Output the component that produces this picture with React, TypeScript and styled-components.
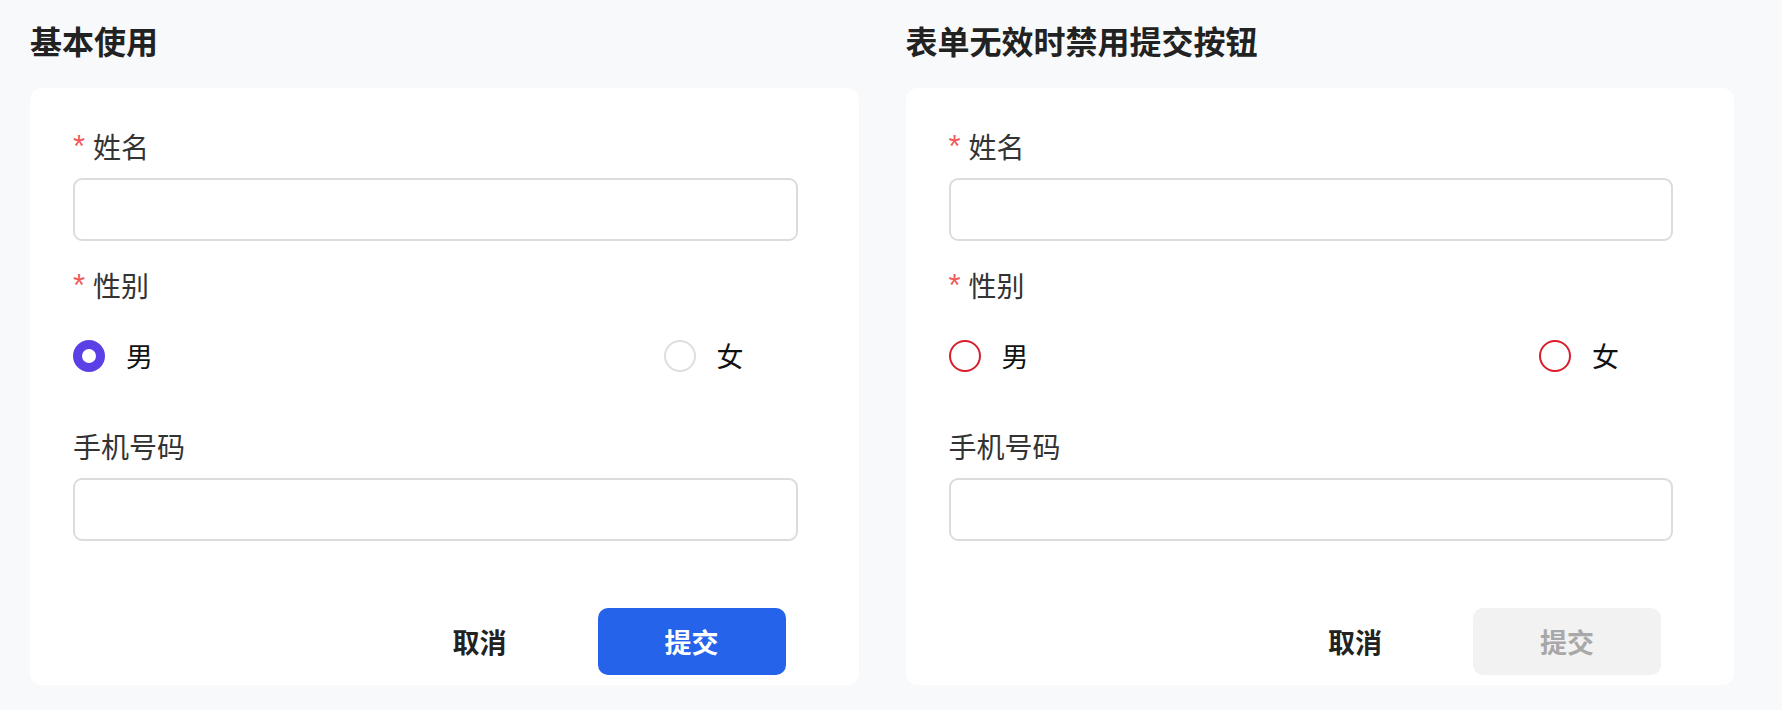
import React, { useState } from "react";
import styled, { createGlobalStyle } from "styled-components";

const GlobalStyle = createGlobalStyle`
  * { box-sizing: border-box; }
  body {
    margin: 0;
    background: #f8f9fb;
    font-family: "Noto Sans CJK SC", "Noto Sans", sans-serif;
    color: #333;
  }
`;

type Gender = "male" | "female" | "";

interface DemoProps {
  title: string;
  strict?: boolean;
}

const Demo = ({ title, strict }: DemoProps) => {
  const [name, setName] = useState("");
  const [gender, setGender] = useState<Gender>(strict ? "" : "male");
  const [phone, setPhone] = useState("");

  const invalid = strict && (!name || !gender);

  return (
    <Section>
      <Title>{title}</Title>
      <Card>
        <Field>
          <Label>
            <Star>*</Star>姓名
          </Label>
          <Input value={name} onChange={(e) => setName(e.target.value)} />
        </Field>
        <Field>
          <Label>
            <Star>*</Star>性别
          </Label>
          <RadioGroup>
            <RadioItem>
              <Radio
                type="radio"
                $error={strict && !gender}
                checked={gender === "male"}
                onChange={() => setGender("male")}
              />
              <RadioText>男</RadioText>
            </RadioItem>
            <RadioItem>
              <Radio
                type="radio"
                $error={strict && !gender}
                checked={gender === "female"}
                onChange={() => setGender("female")}
              />
              <RadioText>女</RadioText>
            </RadioItem>
          </RadioGroup>
        </Field>
        <Field>
          <Label>手机号码</Label>
          <Input value={phone} onChange={(e) => setPhone(e.target.value)} />
        </Field>
        <Actions>
          <Button type="button">取消</Button>
          <Button type="button" $primary disabled={invalid}>
            提交
          </Button>
        </Actions>
      </Card>
    </Section>
  );
};

const App = () => {
  return (
    <>
      <GlobalStyle />
      <Page>
        <Demo title="基本使用" />
        <Demo title="表单无效时禁用提交按钮" strict />
      </Page>
    </>
  );
};

const Page = styled.div`
  display: grid;
  grid-template-columns: 1fr 1fr;
  column-gap: 47px;
  padding: 19px 48px 0 30px;
`;

const Section = styled.section`
  display: flex;
  flex-direction: column;
`;

const Title = styled.h2`
  margin: 0 0 27px;
  font-size: 32px;
  line-height: 42px;
  font-weight: 700;
  color: #222;
`;

const Card = styled.div`
  background: #fff;
  border-radius: 12px;
  padding: 40px 61px 10px 43px;
  display: flex;
  flex-direction: column;
`;

const Field = styled.div`
  display: flex;
  flex-direction: column;
  margin-bottom: 26px;
`;

const Label = styled.label`
  font-size: 28px;
  line-height: 36px;
  color: #333;
  margin-bottom: 14px;
  display: flex;
  align-items: center;
`;

const Star = styled.span`
  color: #f25a5a;
  margin-right: 8px;
  font-family: "Liberation Sans", sans-serif;
  font-size: 31px;
  line-height: 36px;
  position: relative;
  top: 1px;
`;

const Input = styled.input`
  height: 63px;
  width: 100%;
  border: 2px solid #dcdcdc;
  border-radius: 9px;
  padding: 0 16px;
  font-size: 24px;
  font-family: inherit;
  outline: none;
  background: #fff;
`;

const RadioGroup = styled.div`
  display: flex;
  justify-content: space-between;
  align-items: center;
  padding: 23px 54px 30px 0;
`;

const RadioItem = styled.label`
  display: flex;
  align-items: center;
  gap: 21px;
  cursor: pointer;
`;

const Radio = styled.input<{ $error?: boolean }>`
  appearance: none;
  margin: 0;
  width: 32px;
  height: 32px;
  border-radius: 50%;
  border: 2px solid ${(p) => (p.$error ? "#d81e2c" : "#dedede")};
  background: #fff;
  cursor: pointer;

  &:checked {
    border: 9px solid #5a40e6;
  }
`;

const RadioText = styled.span`
  font-size: 27px;
  line-height: 32px;
  color: #111;
`;

const Actions = styled.div`
  display: flex;
  justify-content: flex-end;
  gap: 24px;
  margin-top: 41px;
  padding-right: 12px;
`;

const Button = styled.button<{ $primary?: boolean }>`
  width: 188px;
  height: 67px;
  border: none;
  border-radius: 10px;
  font-family: inherit;
  font-size: 27px;
  font-weight: 700;
  cursor: pointer;
  background: ${(p) => (p.$primary ? "#2563eb" : "transparent")};
  color: ${(p) => (p.$primary ? "#fff" : "#222")};

  &:disabled {
    background: #f2f2f2;
    color: #a8a8a8;
    cursor: not-allowed;
  }
`;

export default App;
